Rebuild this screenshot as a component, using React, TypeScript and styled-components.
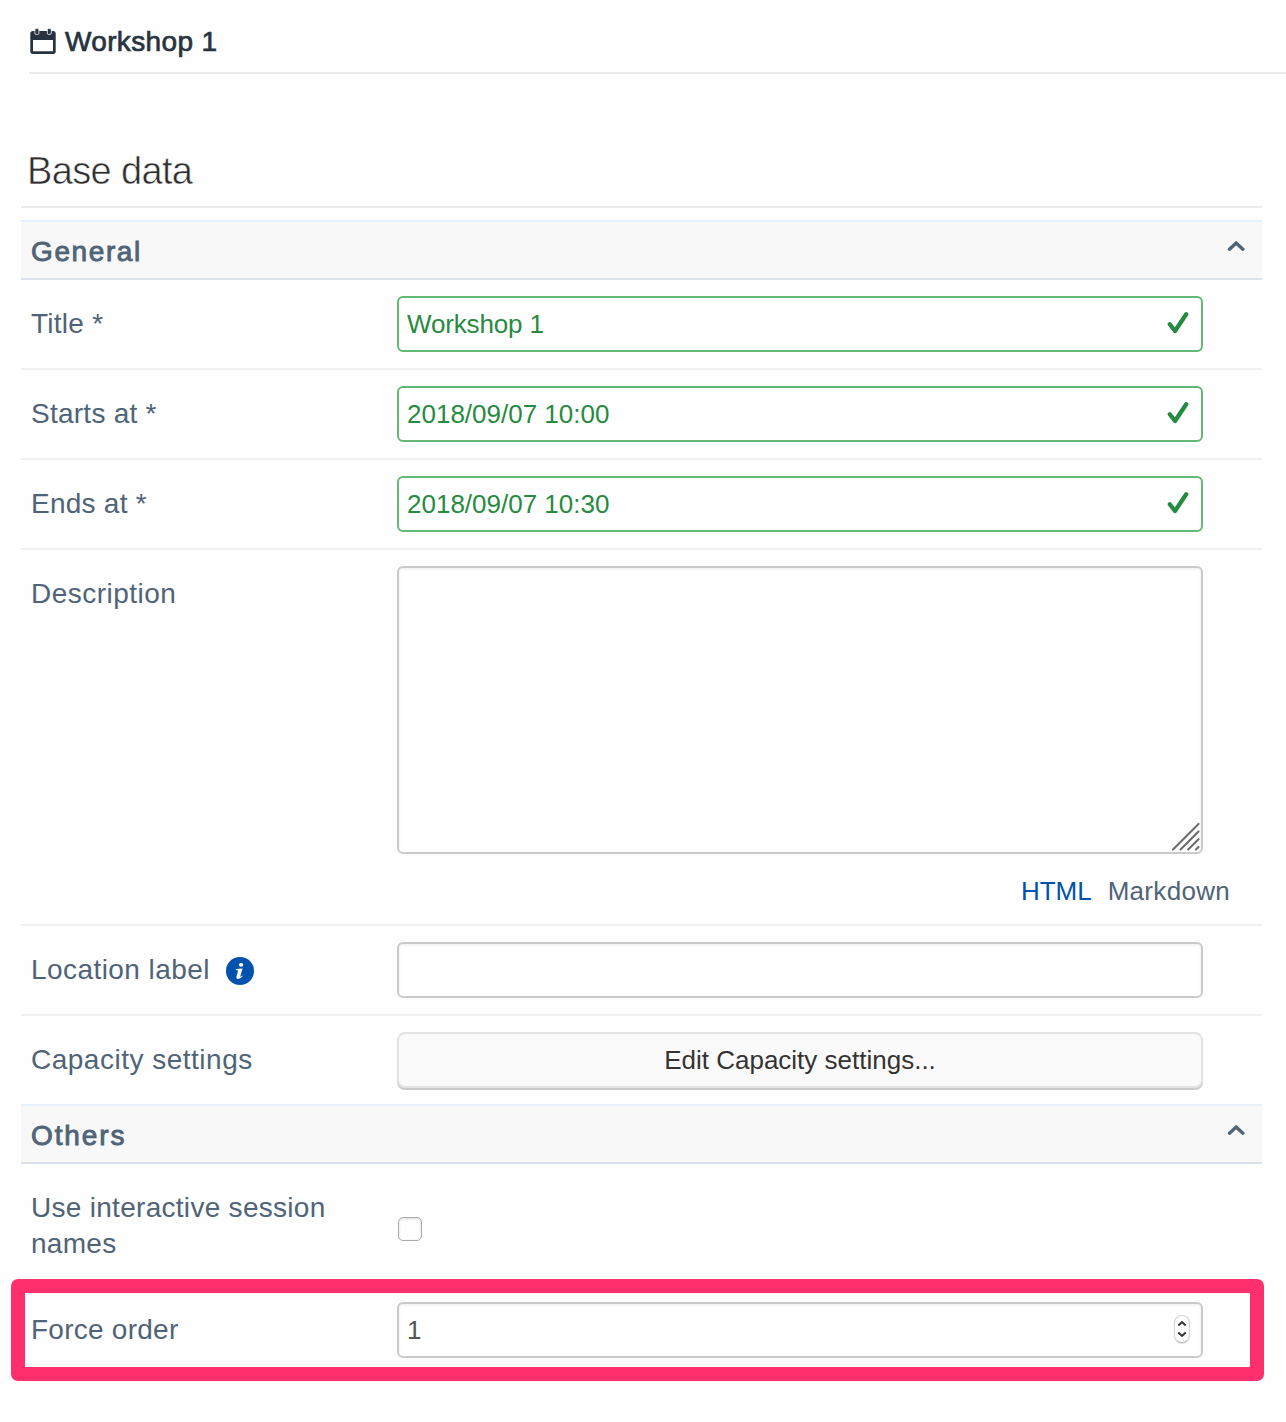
import React from "react";
import styled, { createGlobalStyle } from "styled-components";

const Global = createGlobalStyle`
  * { box-sizing: border-box; }
  body {
    margin: 0;
    background: #fefefe;
    font-family: "Liberation Sans", Arial, Helvetica, sans-serif;
    color: #4f6478;
  }
`;

const Page = styled.main`
  width: 1286px;
  height: 1422px;
  overflow: hidden;
`;

const PageHeader = styled.header`
  display: flex;
  align-items: flex-start;
  gap: 9px;
  height: 74px;
  margin-left: 29px;
  padding: 28px 0 0 1px;
  border-bottom: 2px solid #ebebeb;
  color: #273341;
`;

const PageTitle = styled.h1`
  margin: -4px 0 0;
  font-size: 28px;
  line-height: 36px;
  font-weight: 400;
  letter-spacing: 0.35px;
  -webkit-text-stroke: 0.7px currentColor;
`;

const Form = styled.form`
  width: 1241px;
  margin-left: 21px;
`;

const FormTitle = styled.h2`
  height: 134px;
  margin: 0 0 12px;
  padding: 74px 0 0 6px;
  border-bottom: 2px solid #ebebeb;
  color: #2e2e2e;
  font-size: 38px;
  line-height: 46px;
  font-weight: 400;
  letter-spacing: -0.65px;
  -webkit-text-stroke: 0.6px #fefefe;
`;

const SectionBar = styled.div`
  display: flex;
  justify-content: space-between;
  height: 60px;
  padding: 12px 17px 0 10px;
  border-top: 2px solid #e7f1fd;
  border-bottom: 2px solid #dce2ea;
  background: #f8f8f8;
`;

const SectionTitle = styled.h3<{ $spacing: number }>`
  margin: 0;
  font-size: 28px;
  line-height: 36px;
  font-weight: 400;
  letter-spacing: ${(p) => p.$spacing}px;
  -webkit-text-stroke: 0.9px currentColor;
`;

const Row = styled.div<{ $height: number; $line?: boolean }>`
  display: flex;
  align-items: flex-start;
  height: ${(p) => p.$height}px;
  padding: 16px 0 0 10px;
  border-bottom: ${(p) => (p.$line ? "2px solid #f1f1f1" : "0")};
`;

const Label = styled.label<{ $spacing?: number }>`
  display: flex;
  flex: 0 0 366px;
  padding: 10px 50px 0 0;
  font-size: 28px;
  line-height: 36px;
  letter-spacing: ${(p) => p.$spacing ?? 0.25}px;
`;

const LabelIcon = styled.svg`
  flex: none;
  margin: 5px 0 0 16px;
`;

const Control = styled.div`
  width: 842px;
`;

const Field = styled.div<{ $valid?: boolean; $height?: number }>`
  display: flex;
  justify-content: space-between;
  width: 806px;
  height: ${(p) => p.$height ?? 56}px;
  padding: 0 12px 0 8px;
  border: 2px solid ${(p) => (p.$valid ? "#63b974" : "#cacaca")};
  border-radius: 6px;
  background: #fff;
  box-shadow: ${(p) => (p.$valid ? "none" : "inset 0 1px 3px rgba(0, 0, 0, 0.07)")};
  color: ${(p) => (p.$valid ? "#268b40" : "#555")};
  font-size: 26px;
  line-height: 52px;
`;

const FieldValue = styled.span<{ $spacing?: number }>`
  letter-spacing: ${(p) => p.$spacing ?? 0}px;
`;

const Area = styled(Field)`
  justify-content: flex-end;
  align-items: flex-end;
  padding: 0 1px 1px 0;
`;

const Formats = styled.div`
  display: flex;
  justify-content: flex-end;
  gap: 16px;
  padding: 21px 9px 0 0;
  font-size: 26px;
  line-height: 32px;
`;

const Format = styled.span<{ $active?: boolean; $spacing: number }>`
  color: ${(p) => (p.$active ? "#0052ad" : "#4f6478")};
  letter-spacing: ${(p) => p.$spacing}px;
`;

const Button = styled.button`
  display: block;
  width: 806px;
  height: 56px;
  padding: 0;
  border: 2px solid #e3e3e3;
  border-radius: 8px;
  background: #fafafa;
  box-shadow: 0 2px 0 #cacaca;
  color: #333;
  font: 26px/52px "Liberation Sans", Arial, sans-serif;
`;

const Checkbox = styled.span`
  display: block;
  width: 24px;
  height: 24px;
  margin: 37px 0 0 1px;
  border: 1px solid #a9a9a9;
  border-radius: 5px;
  background: #fff;
  box-shadow: inset 0 1px 3px rgba(0, 0, 0, 0.14);
`;

const Stepper = styled.span`
  display: grid;
  place-items: center;
  width: 16px;
  height: 28px;
  margin: 11px -1px 0 0;
  border: 1px solid #d2d2d2;
  border-bottom-color: #bdbdbd;
  border-radius: 8px;
  background: #fff;
  box-shadow: 0 1px 1px rgba(0, 0, 0, 0.12);
`;

/* The marked row reaches past the form on both sides. */
const Highlight = styled.div`
  width: 1253px;
  height: 102px;
  margin: -7px 0 0 -10px;
  padding: 0 6px;
  border: 14px solid #ff2f6d;
  border-radius: 7px;
`;

const HighlightRow = styled(Row)`
  margin-left: -10px;
  padding-top: 9px;
`;

const ChevronSlot = styled.span`
  display: block;
  height: 12px;
  margin-top: 5.5px;
  line-height: 0;
`;

const CheckSvg = styled.svg`
  flex: none;
  margin-top: 12px;
`;

const CalendarIcon = () => (
  <svg width="26" height="27" viewBox="0 0 26 27">
    <path
      fill="currentColor"
      fillRule="evenodd"
      d="M3 3H23Q25.7 3 25.7 5.7V23.3Q25.7 26 23 26H3Q.3 26 .3 23.3V5.7Q.3 3 3 3ZM3 12V23.3H23V12Z"
    />
    <rect x="4.9" y=".6" width="4" height="5.8" rx="1.2" fill="currentColor" stroke="#fefefe" strokeWidth=".8" />
    <rect x="17.3" y=".6" width="4" height="5.8" rx="1.2" fill="currentColor" stroke="#fefefe" strokeWidth=".8" />
  </svg>
);

const ChevronIcon = () => (
  <svg width="18" height="12" viewBox="0 0 18 12">
    <path d="M2.5 9.2 9.2 3 15.9 9.2" fill="none" stroke="#4f6478" strokeWidth="3.4" strokeLinecap="round" />
  </svg>
);

const CheckIcon = () => (
  <CheckSvg width="24" height="24" viewBox="0 0 24 24">
    <path
      d="M4.8 14.2 10 21 21.2 4.2"
      fill="none"
      stroke="#268b40"
      strokeWidth="4.3"
      strokeLinecap="round"
      strokeLinejoin="round"
    />
  </CheckSvg>
);

const InfoIcon = () => (
  <LabelIcon width="28" height="28" viewBox="0 0 28 28">
    <circle cx="14" cy="14" r="14" fill="#0052ad" />
    <ellipse cx="15.1" cy="7.8" rx="2.2" ry="1.9" fill="#fff" />
    <path
      d="M10 12.1 16.6 11.5 14.2 19.6Q14.6 19.9 16.2 18.4L16.7 19Q14.7 22 12 22 9.9 21.8 10.5 19.4L12.2 13.6 10 13.1Z"
      fill="#fff"
    />
  </LabelIcon>
);

const GripIcon = () => (
  <svg width="28" height="28" viewBox="0 0 28 28">
    <path
      d="M1 26.5 26.5 1M8.6 26.5 26.5 8.6M16.2 26.5 26.5 16.2M24 26.5 26.5 24"
      stroke="#6c6c6c"
      strokeWidth="2.1"
      strokeLinecap="round"
    />
  </svg>
);

const StepperIcon = () => (
  <svg width="10" height="18" viewBox="0 0 10 18">
    <path d="M1.3 5.4 5 2 8.7 5.4M1.3 12.6 5 16 8.7 12.6" fill="none" stroke="#333" strokeWidth="2" />
  </svg>
);

function Section({ title, spacing }: { title: string; spacing: number }) {
  return (
    <SectionBar>
      <SectionTitle $spacing={spacing}>{title}</SectionTitle>
      <ChevronSlot>
        <ChevronIcon />
      </ChevronSlot>
    </SectionBar>
  );
}

const validFields = [
  { label: "Title *", value: "Workshop 1", spacing: -0.15 },
  { label: "Starts at *", value: "2018/09/07 10:00", spacing: 0 },
  { label: "Ends at *", value: "2018/09/07 10:30", spacing: 0 },
];

export default function App() {
  return (
    <Page>
      <Global />
      <PageHeader>
        <CalendarIcon />
        <PageTitle>Workshop 1</PageTitle>
      </PageHeader>
      <Form>
        <FormTitle>Base data</FormTitle>
        <Section title="General" spacing={1.6} />
        {validFields.map((field) => (
          <Row key={field.label} $height={90} $line>
            <Label>{field.label}</Label>
            <Field $valid>
              <FieldValue $spacing={field.spacing}>{field.value}</FieldValue>
              <CheckIcon />
            </Field>
          </Row>
        ))}
        <Row $height={376} $line>
          <Label $spacing={0.47}>Description</Label>
          <Control>
            <Area $height={288}>
              <GripIcon />
            </Area>
            <Formats>
              <Format $active $spacing={0}>HTML</Format>
              <Format $spacing={0.3}>Markdown</Format>
            </Formats>
          </Control>
        </Row>
        <Row $height={90} $line>
          <Label $spacing={0.43}>
            Location label
            <InfoIcon />
          </Label>
          <Field />
        </Row>
        <Row $height={88}>
          <Label $spacing={0.5}>Capacity settings</Label>
          <Button type="button">Edit Capacity settings...</Button>
        </Row>
        <Section title="Others" spacing={1.9} />
        <Row $height={122}>
          <Label $spacing={0.29}>Use interactive session names</Label>
          <Checkbox />
        </Row>
        <Highlight>
          <HighlightRow $height={74}>
            <Label>Force order</Label>
            <Field>
              <FieldValue>1</FieldValue>
              <Stepper>
                <StepperIcon />
              </Stepper>
            </Field>
          </HighlightRow>
        </Highlight>
      </Form>
    </Page>
  );
}
